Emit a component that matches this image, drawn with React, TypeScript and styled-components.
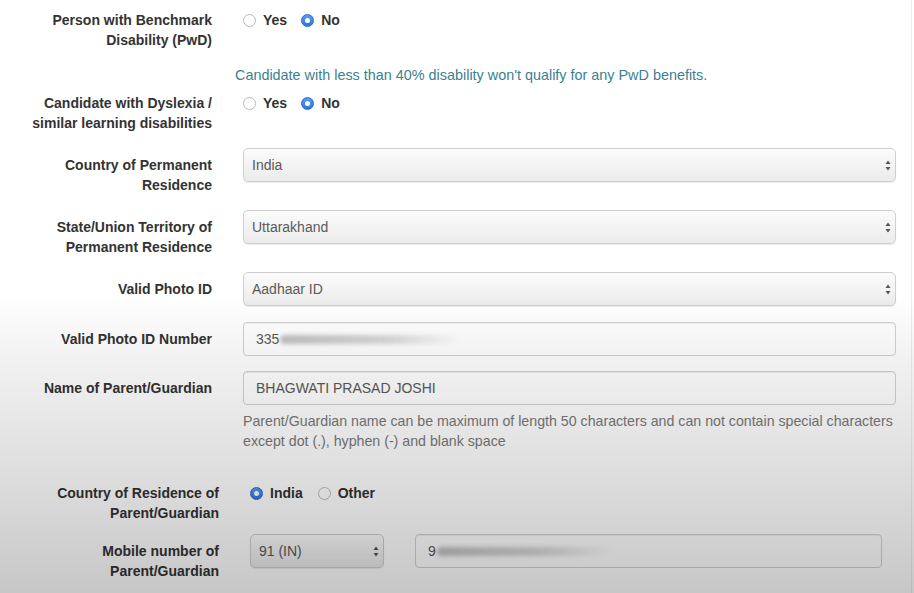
import React from "react";
import styled, { createGlobalStyle } from "styled-components";

const GlobalStyle = createGlobalStyle`
  html, body {
    margin: 0;
    padding: 0;
    background: #ffffff;
  }
  body {
    font-family: "Liberation Sans", Arial, Helvetica, sans-serif;
    color: #333333;
    overflow: hidden;
  }
  body::after {
    content: "";
    position: fixed;
    inset: 0;
    pointer-events: none;
    background: linear-gradient(
      to bottom,
      rgba(0, 0, 0, 0) 0%,
      rgba(0, 0, 0, 0) 50%,
      rgba(0, 0, 0, 0.05) 60%,
      rgba(0, 0, 0, 0.1) 73%,
      rgba(0, 0, 0, 0.15) 84%,
      rgba(0, 0, 0, 0.22) 100%
    );
  }
`;

const Page = styled.div`
  width: 911px;
  height: 590px;
  padding-top: 3px;
  border-right: 1px solid #eeeeee;
  overflow: hidden;
`;

const FormRow = styled.div<{ gap?: number; shift?: number }>`
  display: grid;
  grid-template-columns: 212px 653px;
  column-gap: 31px;
  margin-bottom: ${({ gap }) => gap ?? 15}px;
  padding-left: ${({ shift }) => shift ?? 0}px;
`;

const Label = styled.div`
  text-align: right;
  padding-top: 7px;
  font-size: 14px;
  font-weight: bold;
  line-height: 20px;
  color: #333333;
`;

const Control = styled.div``;

const RadioGroup = styled.div<{ spacing?: number }>`
  display: flex;
  align-items: center;
  gap: ${({ spacing }) => spacing ?? 14}px;
  padding-top: 7px;
  height: 20px;
`;

const RadioItem = styled.label`
  display: flex;
  align-items: center;
  gap: 7px;
  font-size: 14px;
  font-weight: bold;
  line-height: 20px;
  color: #333333;
`;

const RadioCircle = styled.span<{ checked?: boolean }>`
  box-sizing: border-box;
  width: 13px;
  height: 13px;
  border-radius: 50%;
  display: inline-flex;
  align-items: center;
  justify-content: center;
  ${({ checked }) =>
    checked
      ? `
    background: linear-gradient(#5a9cf0, #2f76dc);
    border: 1px solid #2a6acb;
  `
      : `
    background: #ffffff;
    border: 1px solid #b9b9b9;
  `}

  &::after {
    content: "";
    width: 5px;
    height: 5px;
    border-radius: 50%;
    background: #ffffff;
    display: ${({ checked }) => (checked ? "block" : "none")};
  }
`;

const InfoNote = styled.div`
  padding-left: 235px;
  font-size: 14.4px;
  line-height: 20px;
  color: #3b7f92;
  margin-bottom: 1px;
`;

const SelectBox = styled.div<{ width?: number }>`
  box-sizing: border-box;
  height: 34px;
  width: ${({ width }) => (width ? `${width}px` : "100%")};
  display: flex;
  align-items: center;
  justify-content: space-between;
  padding: 0 4px 0 8px;
  border: 1px solid #cfcfcf;
  border-radius: 5px;
  background: linear-gradient(#fbfbfb, #ebebeb);
  box-shadow: 0 1px 1px rgba(0, 0, 0, 0.08);
  font-size: 14px;
  color: #5a5a5a;
`;

const TextInput = styled.div<{ width?: number }>`
  box-sizing: border-box;
  height: 34px;
  width: ${({ width }) => (width ? `${width}px` : "100%")};
  display: flex;
  align-items: center;
  padding: 0 12px;
  border: 1px solid #d2d2d2;
  border-radius: 4px;
  background: #ffffff;
  box-shadow: inset 0 1px 1px rgba(0, 0, 0, 0.06);
  font-size: 14px;
  color: #5a5a5a;
`;

const Smudge = styled.span<{ width: number }>`
  display: inline-block;
  width: ${({ width }) => width}px;
  height: 9px;
  margin-left: 1px;
  border-radius: 5px;
  background: linear-gradient(
    to right,
    rgba(150, 150, 150, 0.6),
    rgba(170, 170, 170, 0.45) 60%,
    rgba(190, 190, 190, 0)
  );
  filter: blur(2px);
`;

const HelpBlock = styled.div`
  margin-top: 6px;
  font-size: 14.2px;
  line-height: 20px;
  color: #7a7a7a;
`;

const SplitControl = styled.div`
  display: flex;
  align-items: center;
  gap: 31px;
`;

function UpDownArrows() {
  return (
    <svg width="6" height="11" viewBox="0 0 6 11">
      <path d="M3 0.5 L5.5 4 L0.5 4 Z" fill="#555" />
      <path d="M3 10.5 L5.5 7 L0.5 7 Z" fill="#555" />
    </svg>
  );
}

function Radio({ label, checked }: { label: string; checked?: boolean }) {
  return (
    <RadioItem>
      <RadioCircle checked={checked} />
      {label}
    </RadioItem>
  );
}

function Select({ value, width }: { value: string; width?: number }) {
  return (
    <SelectBox width={width}>
      <span>{value}</span>
      <UpDownArrows />
    </SelectBox>
  );
}

export default function App() {
  return (
    <>
      <GlobalStyle />
      <Page>
        <FormRow>
          <Label>
            Person with Benchmark
            <br />
            Disability (PwD)
          </Label>
          <Control>
            <RadioGroup>
              <Radio label="Yes" />
              <Radio label="No" checked />
            </RadioGroup>
          </Control>
        </FormRow>

        <InfoNote>
          Candidate with less than 40% disability won't qualify for any PwD benefits.
        </InfoNote>

        <FormRow>
          <Label>
            Candidate with Dyslexia /
            <br />
            similar learning disabilities
          </Label>
          <Control>
            <RadioGroup>
              <Radio label="Yes" />
              <Radio label="No" checked />
            </RadioGroup>
          </Control>
        </FormRow>

        <FormRow>
          <Label>
            Country of Permanent
            <br />
            Residence
          </Label>
          <Control>
            <Select value="India" />
          </Control>
        </FormRow>

        <FormRow>
          <Label>
            State/Union Territory of
            <br />
            Permanent Residence
          </Label>
          <Control>
            <Select value="Uttarakhand" />
          </Control>
        </FormRow>

        <FormRow gap={16}>
          <Label>Valid Photo ID</Label>
          <Control>
            <Select value="Aadhaar ID" />
          </Control>
        </FormRow>

        <FormRow>
          <Label>Valid Photo ID Number</Label>
          <Control>
            <TextInput>
              335
              <Smudge width={180} />
            </TextInput>
          </Control>
        </FormRow>

        <FormRow gap={25}>
          <Label>Name of Parent/Guardian</Label>
          <Control>
            <TextInput>BHAGWATI PRASAD JOSHI</TextInput>
            <HelpBlock>
              Parent/Guardian name can be maximum of length 50 characters and can not contain special characters
              <br />
              except dot (.), hyphen (-) and blank space
            </HelpBlock>
          </Control>
        </FormRow>

        <FormRow gap={11} shift={7}>
          <Label>
            Country of Residence of
            <br />
            Parent/Guardian
          </Label>
          <Control>
            <RadioGroup spacing={15}>
              <Radio label="India" checked />
              <Radio label="Other" />
            </RadioGroup>
          </Control>
        </FormRow>

        <FormRow shift={7}>
          <Label>
            Mobile number of
            <br />
            Parent/Guardian
          </Label>
          <Control>
            <SplitControl>
              <Select value="91 (IN)" width={134} />
              <TextInput width={467}>
                9
                <Smudge width={175} />
              </TextInput>
            </SplitControl>
          </Control>
        </FormRow>
      </Page>
    </>
  );
}
